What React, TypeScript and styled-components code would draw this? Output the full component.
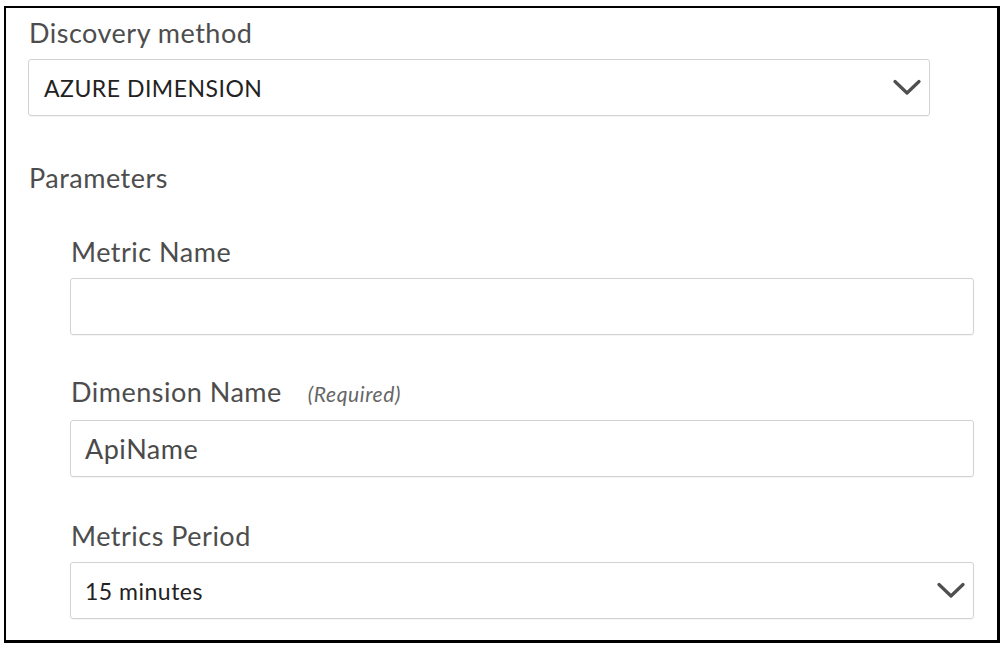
import React from "react";
import styled, { createGlobalStyle } from "styled-components";

const Global = createGlobalStyle`
  html, body { margin: 0; padding: 0; background: #fff; }
  body { font-family: Lato, "Noto Sans", sans-serif; }
  * { box-sizing: border-box; }
`;

const Frame = styled.div`
  margin: 6px 0 0 4px;
  width: 996px;
  height: 637px;
  border-style: solid;
  border-color: #000;
  border-width: 2px 3px 3px 2px;
  padding: 11px 23px 0 22px;
  display: flex;
  flex-direction: column;
`;

const Label = styled.div`
  font-size: 27px;
  line-height: 28px;
  letter-spacing: 0.5px;
  color: #4d4d4d;
  display: flex;
  align-items: baseline;
  padding-left: 1px;
`;

const Hint = styled.span`
  font-size: 21px;
  font-style: italic;
  letter-spacing: 0.6px;
  color: #666;
  margin-left: 26px;
`;

const Box = styled.div<{ $width?: string }>`
  height: 57px;
  width: ${(p) => p.$width || "100%"};
  border: 1px solid #d2d2d2;
  border-radius: 3px;
  box-shadow: 0 1px 1px rgba(0, 0, 0, 0.04);
  display: flex;
  align-items: center;
  justify-content: space-between;
  padding: 0 8px 0 14px;
  color: #222;
  margin-top: 12px;
`;

const Value = styled.span<{ $large?: boolean; $caps?: boolean }>`
  font-size: ${(p) => (p.$large ? "27px" : "23px")};
  color: ${(p) => (p.$large ? "#4a4a4a" : "#222")};
  letter-spacing: 0.5px;
  padding-left: ${(p) => (p.$caps ? "1px" : "0")};
`;

const Section = styled.div`
  margin-top: 48px;
  display: flex;
  flex-direction: column;
`;

const Params = styled.div`
  padding-left: 42px;
  display: flex;
  flex-direction: column;
`;

const Field = styled.div<{ $gap: number }>`
  margin-top: ${(p) => p.$gap}px;
  display: flex;
  flex-direction: column;
`;

const Chevron = () => (
  <svg width="28" height="17" viewBox="0 0 28 17" fill="none">
    <path d="M2 2.5 L14 14 L26 2.5" stroke="#4f4f4f" strokeWidth="3.2" strokeLinecap="round" strokeLinejoin="round" />
  </svg>
);

export default function App() {
  return (
    <>
      <Global />
      <Frame>
        <Label>Discovery method</Label>
        <Box $width="902px">
          <Value $caps>AZURE DIMENSION</Value>
          <Chevron />
        </Box>
        <Section>
          <Label>Parameters</Label>
          <Params>
            <Field $gap={46}>
              <Label>Metric Name</Label>
              <Box />
            </Field>
            <Field $gap={43}>
              <Label>
                Dimension Name<Hint>(Required)</Hint>
              </Label>
              <Box>
                <Value $large>ApiName</Value>
              </Box>
            </Field>
            <Field $gap={45}>
              <Label>Metrics Period</Label>
              <Box>
                <Value>15 minutes</Value>
                <Chevron />
              </Box>
            </Field>
          </Params>
        </Section>
      </Frame>
    </>
  );
}
